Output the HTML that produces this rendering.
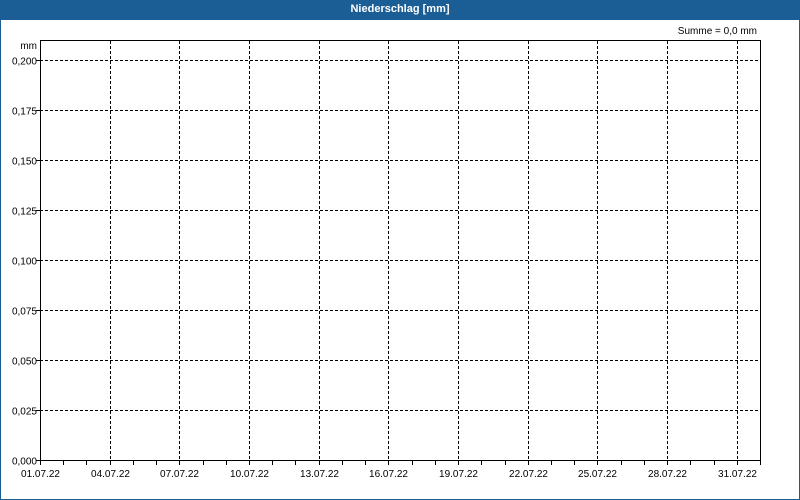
<!DOCTYPE html>
<html><head><meta charset="utf-8"><style>
html,body{margin:0;padding:0;background:#fff;}
body{width:800px;height:500px;overflow:hidden;position:relative;font-family:"Liberation Sans",sans-serif;}
.hdr{position:absolute;left:0;top:0;width:800px;height:20px;background:#1b5e96;color:#fff;font-size:11px;font-weight:bold;text-align:center;line-height:18px;}
.frame{position:absolute;left:0;top:20px;width:798px;height:479px;border:1px solid #1b5e96;border-top:none;}
svg{position:absolute;left:0;top:0;}
text{font-family:"Liberation Sans",sans-serif;font-size:10px;fill:#000;}
</style></head><body>
<div class="hdr">Niederschlag [mm]</div>
<div class="frame"></div>
<svg width="800" height="500" id="s">
<rect x="40.5" y="40.5" width="720" height="420" fill="none" stroke="#000" stroke-width="1"/>
<text x="757" y="34" text-anchor="end">Summe = 0,0 mm</text>
<text x="37" y="49" text-anchor="end">mm</text>
</svg>
<script>
var s=document.getElementById('s'),ns='http://www.w3.org/2000/svg';
function el(t,a,txt){var e=document.createElementNS(ns,t);for(var k in a)e.setAttribute(k,a[k]);if(txt)e.textContent=txt;s.appendChild(e);}
var yl=['0,200','0,175','0,150','0,125','0,100','0,075','0,050','0,025','0,000'];
for(var i=0;i<9;i++){var y=60.5+50*i;
 if(i<8)el('line',{x1:40,y1:y,x2:760,y2:y,stroke:'#000','stroke-dasharray':'3,2'});
 el('line',{x1:36,y1:y,x2:40,y2:y,stroke:'#000'});
 el('text',{x:37,y:y+4,'text-anchor':'end'},yl[i]);}
var d=720/31;
for(var k=0;k<=31;k++){var x=Math.round(40+d*k)+0.5;
 el('line',{x1:x,y1:460,x2:x,y2:465,stroke:'#000'});
 if(k%3==0&&k<=30){var day=k+1;var lbl=(day<10?'0':'')+day+'.07.22';
  el('text',{x:x,y:477,'text-anchor':'middle'},lbl);
  if(k>0)el('line',{x1:x,y1:41,x2:x,y2:460,stroke:'#000','stroke-dasharray':'3,2'});}}
</script>
</body></html>
